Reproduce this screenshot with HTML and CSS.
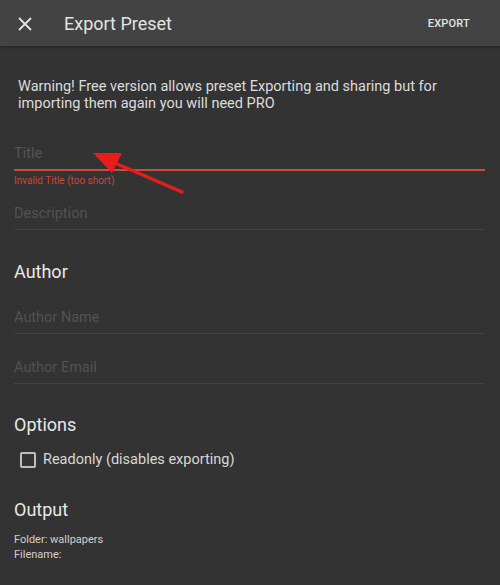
FILE: index.html
```html
<!DOCTYPE html>
<html>
<head>
<meta charset="utf-8">
<link rel="stylesheet" href="styles.css">
</head>
<body>
<header class="bar">
  <svg class="close" width="14" height="14" viewBox="0 0 14 14"><path d="M1 1L13 13M13 1L1 13" stroke="#e0e0e0" stroke-width="1.8" fill="none"/></svg>
  <div class="bar-title">Export Preset</div>
  <div class="bar-action">EXPORT</div>
</header>
<main class="content">
  <p class="warning">Warning! Free version allows preset Exporting and sharing but for importing them again you will need PRO</p>
  <div class="field field-error">
    <div class="placeholder">Title</div>
    <div class="line"></div>
    <div class="error">Invalid Title (too short)</div>
  </div>
  <div class="field field-desc">
    <div class="placeholder">Description</div>
    <div class="line"></div>
  </div>
  <h2 class="section author">Author</h2>
  <div class="field field-name">
    <div class="placeholder">Author Name</div>
    <div class="line"></div>
  </div>
  <div class="field field-email">
    <div class="placeholder">Author Email</div>
    <div class="line"></div>
  </div>
  <h2 class="section options">Options</h2>
  <label class="check"><span class="box"></span><span>Readonly (disables exporting)</span></label>
  <h2 class="section output">Output</h2>
  <div class="meta">Folder: wallpapers</div>
  <div class="meta">Filename:</div>
</main>
<svg class="arrow" width="500" height="585" viewBox="0 0 500 585">
  <line x1="182" y1="192" x2="108" y2="160" stroke="#e81c1c" stroke-width="3.5" stroke-linecap="round"/>
  <polygon points="93,153 122,153 112,173" fill="#e81c1c"/>
</svg>
</body>
</html>
```
FILE: styles.css
```css
html, body {
  margin: 0;
  padding: 0;
}
body {
  background: #333333;
  font-family: Roboto, "Noto Sans", sans-serif;
  width: 500px;
  height: 585px;
  overflow: hidden;
  position: relative;
}
.bar {
  height: 46px;
  background: #434343;
  display: flex;
  align-items: center;
  box-shadow: 0 1px 3px rgba(0,0,0,0.35);
  position: relative;
}
.close {
  margin-left: 18px;
  margin-top: 1px;
}
.bar-title {
  margin-left: 32px;
  font-size: 18px;
  color: #e4e4e4;
}
.bar-action {
  margin-left: auto;
  margin-right: 30px;
  font-size: 11px;
  font-weight: 500;
  color: #e4e4e4;
  letter-spacing: 0.2px;
}
.content {
  padding: 0 15px 0 14px;
}
.warning {
  margin: 32px 0 0 4px;
  font-size: 14.5px;
  line-height: 17px;
  color: #dcdcdc;
}
.field {
  display: flex;
  flex-direction: column;
}
.placeholder {
  font-size: 14.5px;
  line-height: 17px;
  color: #525252;
}
.line {
  height: 1px;
  background: #434343;
  margin-top: 7px;
}
.field-error {
  margin-top: 33px;
}
.field-error .placeholder {
  color: #545454;
}
.field-error .line {
  height: 2px;
  background: #cf4a3c;
}
.error {
  font-size: 10px;
  line-height: 12px;
  color: #c14a3a;
  margin-top: 4px;
}
.field-desc {
  margin-top: 18px;
}
.section {
  margin: 0;
  font-weight: 400;
  font-size: 18px;
  line-height: 21px;
  color: #e8e8e8;
}
.author {
  margin-top: 31px;
}
.field-name {
  margin-top: 27px;
}
.field-email {
  margin-top: 25px;
}
.options {
  margin-top: 30px;
}
.check {
  display: flex;
  align-items: center;
  gap: 7px;
  margin: 16px 0 0 6px;
  font-size: 14.5px;
  line-height: 17px;
  color: #d8d8d8;
}
.box {
  width: 12px;
  height: 12px;
  border: 2px solid #bdbdbd;
  border-radius: 2px;
}
.output {
  margin-top: 31px;
}
.meta {
  font-size: 11px;
  line-height: 15px;
  color: #d0d0d0;
}
.output + .meta {
  margin-top: 12px;
}
.arrow {
  position: absolute;
  left: 0;
  top: 0;
  pointer-events: none;
}
```
